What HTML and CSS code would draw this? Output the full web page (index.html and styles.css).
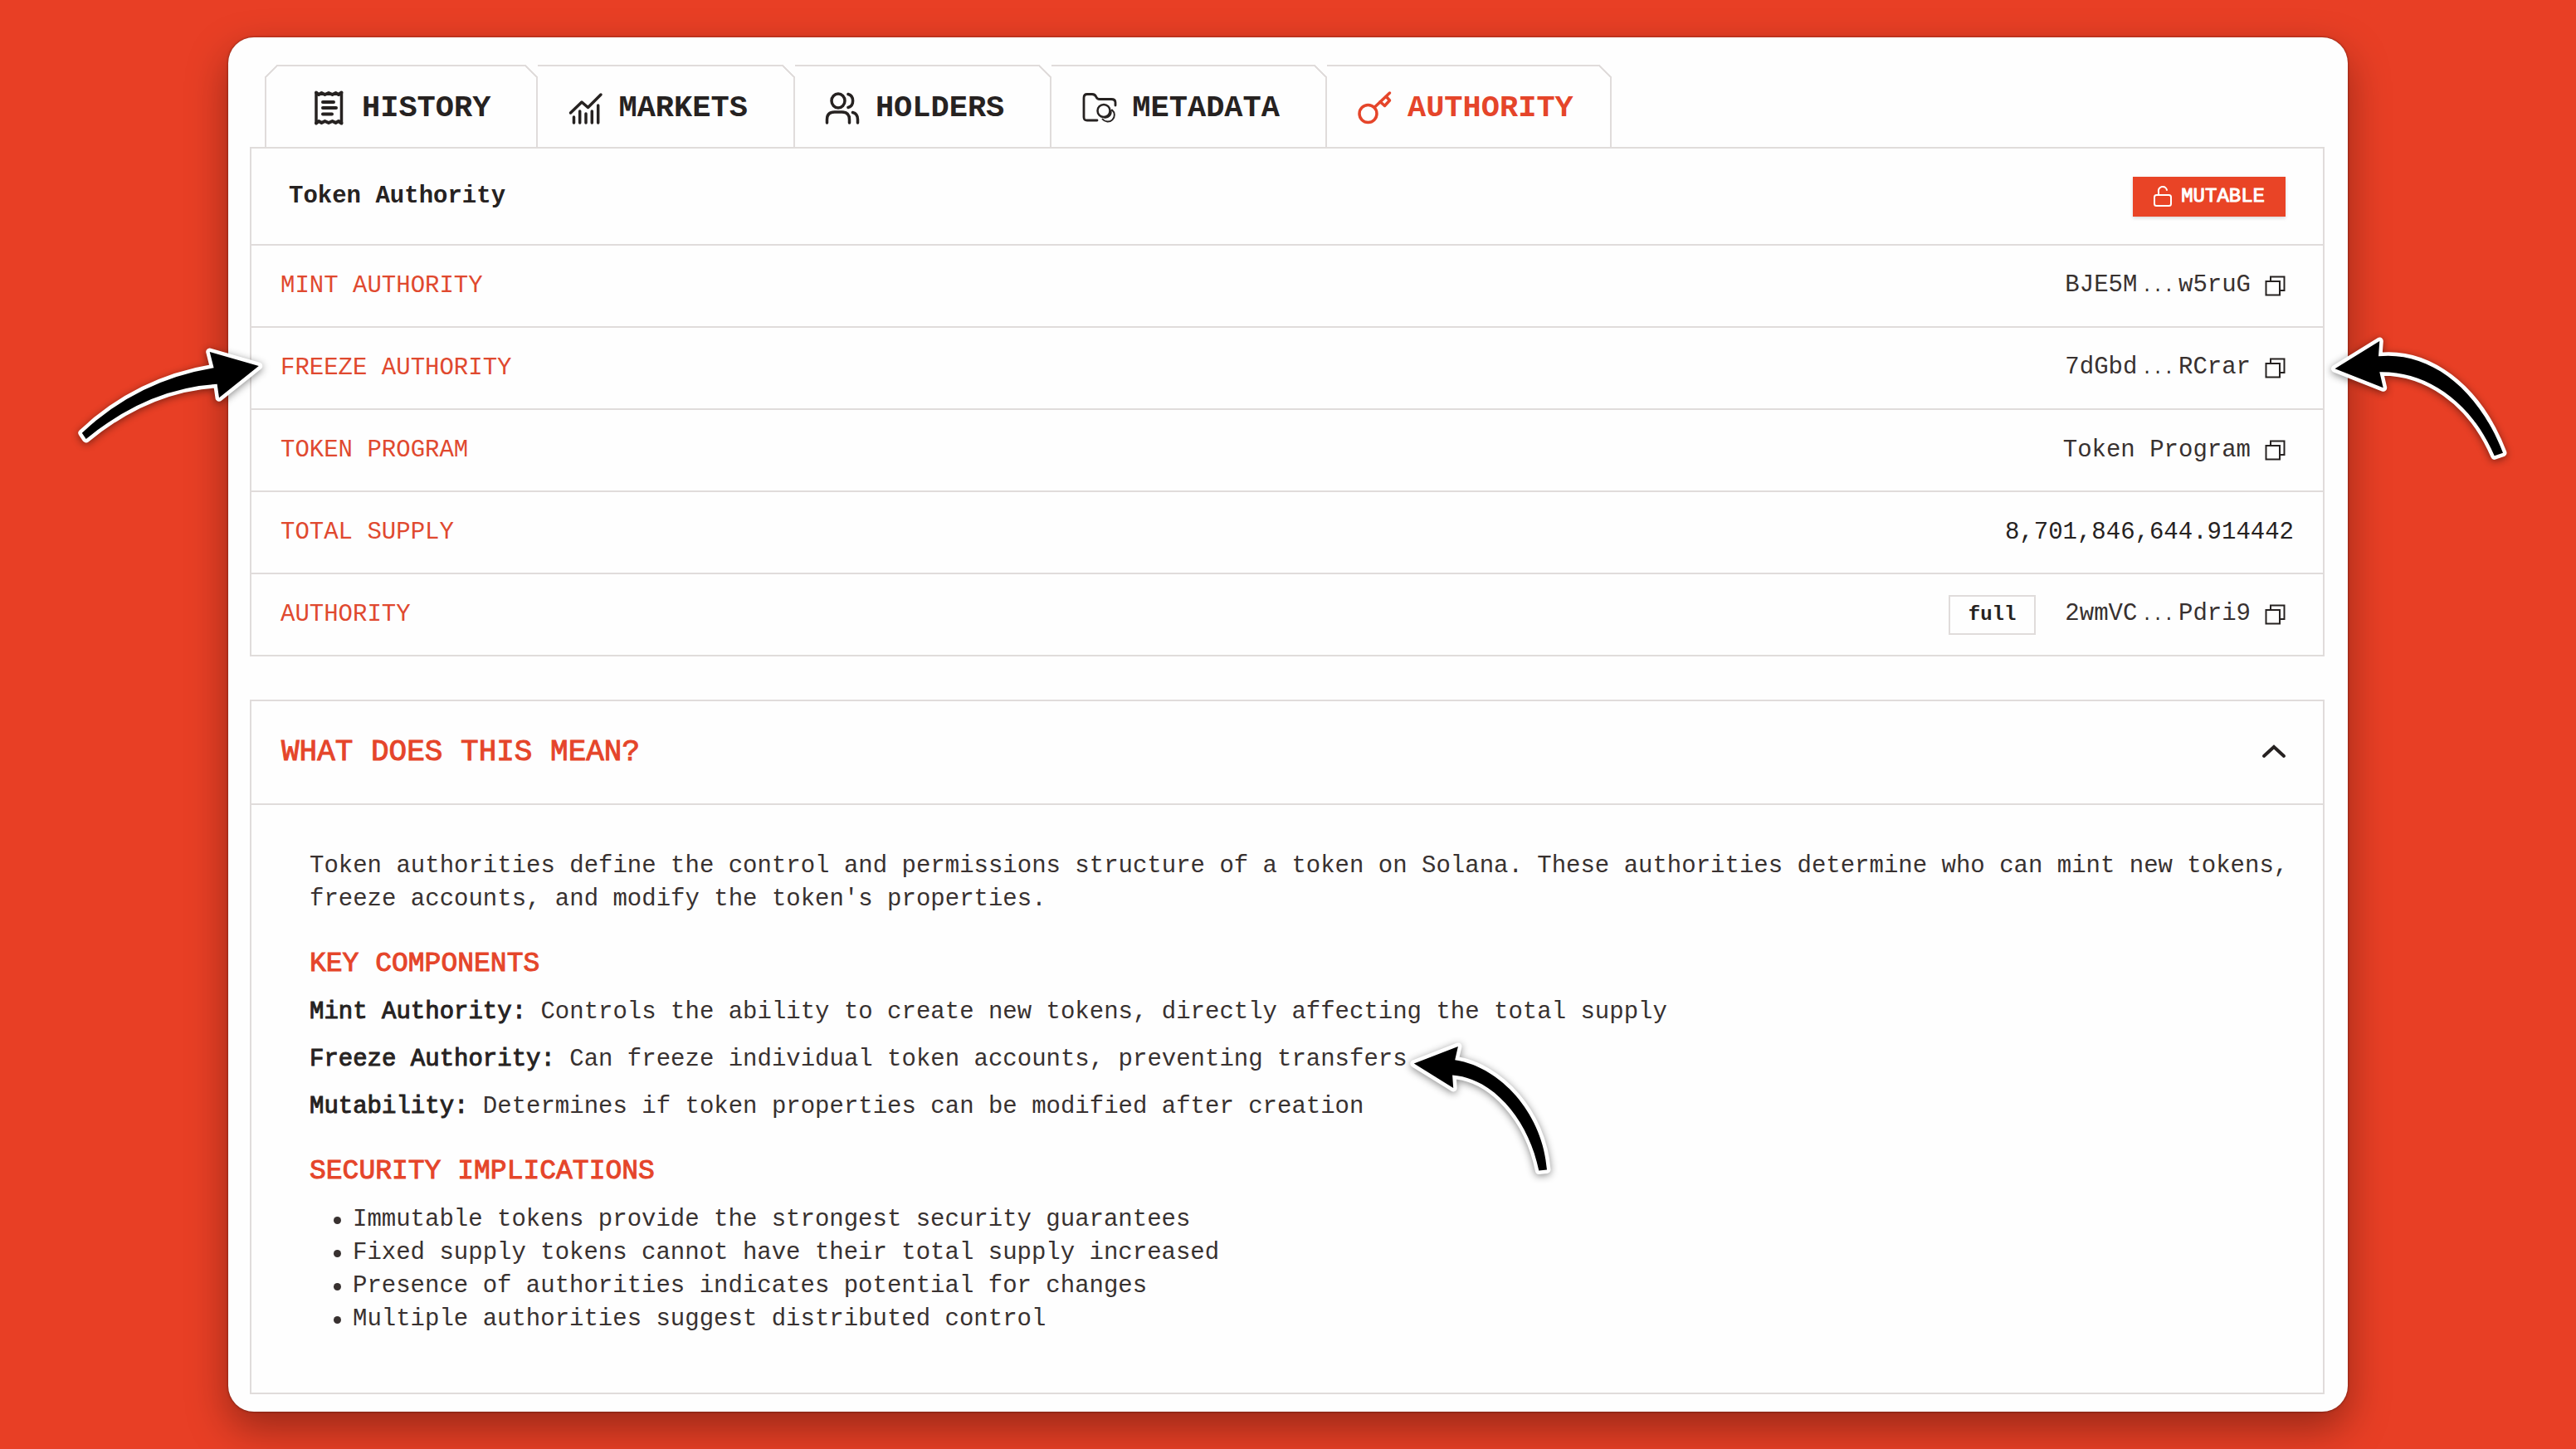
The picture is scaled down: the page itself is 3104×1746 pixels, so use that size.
FILE: index.html
```html
<!DOCTYPE html>
<html lang="en">
<head>
    <meta charset="UTF-8">
    <meta name="viewport" content="width=device-width, initial-scale=1.0">
    <title>Token Authority</title>
    <link rel="stylesheet" href="styles.css">
</head>
<body>
    <!-- Shared icons -->
    <svg class="sprite" aria-hidden="true">
        <symbol id="copy" viewBox="0 0 25 25">
            <path d="M7 6V1.5h16.500V18H19M1.500 7H18v16.500H1.500z" fill="none" stroke="currentColor" stroke-width="2"/>
        </symbol>
    </svg>

    <main class="card">
        <nav class="tabs">
            <button class="tab" type="button">
                <svg class="tab-icon" viewBox="0 0 40 40">
                    <path d="M5 2v36M35.500 2v36" stroke-width="3.500"/>
                    <path d="M5 1.500l3 2.500 3.500-2 4 2 4.500-2 4.500 2 4-2 3.500 2 3.500-2.500M5 38.500l3-2.500 3.500 2 4-2 4.500 2 4.500-2 4 2 3.500-2 3.500 2.500" stroke-width="4"/>
                    <path d="M13 13h13M13 20h16M13 27.500h11" stroke-width="4"/>
                </svg>
                HISTORY
            </button>
            <button class="tab" type="button">
                <svg class="tab-icon" viewBox="0 0 40 40">
                    <path d="M2.500 26L16 13l7.500 6.500L39 4M6.500 31v7M13.700 24v14M21 27v11M28.300 24v14M35.700 17v21"/>
                </svg>
                MARKETS
            </button>
            <button class="tab" type="button">
                <svg class="tab-icon" viewBox="0 0 40 40">
                    <ellipse cx="15" cy="11.500" rx="8" ry="8.500"/>
                    <path d="M1.500 38v-4c0-6 3-9 9-9h9c6 0 9 3 9 9v4M27 3.500c7.500 2 7.500 14 0 16M32.500 25.500c4 1 6 4 6 8.500v4"/>
                </svg>
                HOLDERS
            </button>
            <button class="tab" type="button">
                <svg class="tab-icon" viewBox="0 0 40 40">
                    <path d="M18 35H6c-3 0-4-1-4-4V8c0-3 1-4.500 4-4.500h6c3 0 4 1 5 3.500s2 2.500 4 2.500h14c3.500 0 5 1.500 5 4V17" stroke-width="2.800"/>
                    <circle cx="26" cy="23.500" r="7.500" stroke-width="2.500"/>
                    <path d="M36 22.500a8 8 0 1 1-11.500 11M26.500 31.500c5.500 1 9-3.500 8-8" stroke-width="2"/>
                </svg>
                METADATA
            </button>
            <button class="tab active" type="button">
                <svg class="tab-icon" viewBox="0 0 40 40">
                    <circle cx="12.500" cy="27" r="10.500"/>
                    <path d="M20 19.500L38.500 2M27 12.500l5.500 5 6-6.500-4.500-5"/>
                </svg>
                AUTHORITY
            </button>
        </nav>

        <section class="panel">
            <header class="panel-head">
                <h2 class="panel-title">Token Authority</h2>
                <span class="badge">
                    <svg class="lock" viewBox="0 0 22 25">
                        <rect x="1" y="11" width="20" height="13" rx="2.500"/>
                        <path d="M6 11V7a5 5 0 0 1 10-2"/>
                    </svg>
                    MUTABLE
                </span>
            </header>
            <div class="row">
                <span class="label">MINT AUTHORITY</span>
                <span class="value">BJE5M<span class="dots">...</span>w5ruG</span>
                <button class="copy" type="button" aria-label="Copy"><svg><use href="#copy"/></svg></button>
            </div>
            <div class="row">
                <svg class="arrow arrow-left" viewBox="0 0 240 130">
                    <path d="M18.800 96.700Q85.800 33.500 177.600 18.300L172.700-1 231.800 16 184 54.300 181.600 37.700Q97.400 43 23.700 104z"/>
                </svg>
                <span class="label">FREEZE AUTHORITY</span>
                <span class="value">7dGbd<span class="dots">...</span>RCrar</span>
                <button class="copy" type="button" aria-label="Copy"><svg><use href="#copy"/></svg></button>
                <svg class="arrow arrow-right" viewBox="0 0 300 200">
                    <path d="M33.500 64.300L87.300 31 86 49.300C145 43 205 85 236 165.700L225.700 169.300C197 102 142 67 87.300 68.300L91.700 87.300z"/>
                </svg>
            </div>
            <div class="row">
                <span class="label">TOKEN PROGRAM</span>
                <span class="value">Token Program</span>
                <button class="copy" type="button" aria-label="Copy"><svg><use href="#copy"/></svg></button>
            </div>
            <div class="row">
                <span class="label">TOTAL SUPPLY</span>
                <span class="value number">8,701,846,644.914442</span>
            </div>
            <div class="row">
                <span class="label">AUTHORITY</span>
                <span class="tag">full</span>
                <span class="value">2wmVC<span class="dots">...</span>Pdri9</span>
                <button class="copy" type="button" aria-label="Copy"><svg><use href="#copy"/></svg></button>
            </div>
        </section>

        <section class="panel">
            <button class="toggle" type="button" aria-expanded="true">
                WHAT DOES THIS MEAN?
                <svg class="chevron" viewBox="0 0 28 16"><path d="M2 12L14 1l12 11"/></svg>
            </button>
            <div class="content">
                <p>Token authorities define the control and permissions structure of a token on Solana. These authorities determine who can mint new tokens, freeze accounts, and modify the token's properties.</p>

                <h3>KEY COMPONENTS</h3>
                <div class="terms">
                    <p><strong>Mint Authority:</strong> Controls the ability to create new tokens, directly affecting the total supply</p>
                    <p>
                        <strong>Freeze Authority:</strong> Can freeze individual token accounts, preventing transfers
                        <svg class="arrow arrow-text" viewBox="0 0 280 240">
                            <path d="M56.800 62.600L109.900 41.900 106.200 58.200C160 66 212 122 217 190.400L207.300 191.400C195 130 152 80 103.100 76.400L104.200 92z"/>
                        </svg>
                    </p>
                    <p><strong>Mutability:</strong> Determines if token properties can be modified after creation</p>
                </div>

                <h3>SECURITY IMPLICATIONS</h3>
                <ul>
                    <li>Immutable tokens provide the strongest security guarantees</li>
                    <li>Fixed supply tokens cannot have their total supply increased</li>
                    <li>Presence of authorities indicates potential for changes</li>
                    <li>Multiple authorities suggest distributed control</li>
                </ul>
            </div>
        </section>
    </main>
</body>
</html>
```
FILE: styles.css
```css
* {
    box-sizing: border-box;
}
body {
    margin: 0;
    padding: 45px 275px;
    background-color: #e83f25;
    color: #383130;
    font-family: "Liberation Mono", monospace;
    font-size: 29px;
    line-height: 40px;
}
h2, h3, p, ul {
    margin: 0;
    padding: 0;
}
button {
    border: none;
    background: none;
    color: inherit;
    font: inherit;
    cursor: pointer;
}
.sprite {
    position: absolute;
    width: 0;
    height: 0;
}
.card {
    padding: 33px 28px 21px 26px;
    background-color: #fefefe;
    border-radius: 31px;
    box-shadow: 0 0 3px rgba(0, 0, 0, 0.5), 0 20px 50px rgba(0, 0, 0, 0.35);
}

/* Tabs */
.tabs {
    display: flex;
    padding-left: 18px;
}
.tab {
    position: relative;
    display: flex;
    align-items: center;
    gap: 20px;
    height: 99px;
    padding: 2px 55px 0 37px;
    border: solid #e0dcdb;
    border-width: 2px 2px 0 0;
    color: #262221;
    font-size: 37px;
    font-weight: bold;
}
.tab:first-child {
    padding-left: 55px;
    border-left-width: 2px;
}
.tab:last-child {
    padding-right: 44px;
}
.tab.active {
    color: #e5452a;
}
/* cut corners */
.tab::after,
.tab:first-child::before {
    content: "";
    position: absolute;
    top: -2px;
    right: -2px;
    width: 16px;
    height: 16px;
    background: linear-gradient(45deg, #fefefe 44%, #e0dcdb 44%, #e0dcdb 54%, #fefefe 54%);
}
.tab:first-child::before {
    right: auto;
    left: -2px;
    transform: scaleX(-1);
}
.tab-icon {
    width: 40px;
    height: 40px;
    overflow: visible;
    fill: none;
    stroke: currentColor;
    stroke-width: 3.5;
    stroke-linecap: round;
    stroke-linejoin: round;
}

/* Panels */
.panel {
    border: 2px solid #e0dcdb;
}
.panel + .panel {
    margin-top: 52px;
}
.panel-head {
    display: flex;
    align-items: center;
    justify-content: space-between;
    height: 115px;
    padding: 0 45px;
}
.panel-title {
    color: #262221;
    font-size: 29px;
}
.badge {
    display: flex;
    align-items: center;
    gap: 11px;
    height: 48px;
    padding: 0 25px;
    background-color: #e94426;
    box-shadow: 0 2px 4px rgba(0, 0, 0, 0.15);
    color: #fff;
    font-size: 24px;
    -webkit-text-stroke: 1px;
}
.lock {
    width: 22px;
    height: 25px;
    fill: none;
    stroke: currentColor;
    stroke-width: 2;
    stroke-linecap: round;
}
.row {
    position: relative;
    display: flex;
    align-items: center;
    height: 99px;
    padding: 0 35px;
    border-top: 2px solid #e0dcdb;
}
.label {
    margin-right: auto;
    color: #e0492f;
}
.number {
    color: #262221;
}
.dots {
    margin: 0 5px;
    font-size: 22px;
}
.copy {
    display: flex;
    margin-left: 17px;
    padding: 0 10px 0 0;
    color: #262221;
}
.copy svg {
    width: 25px;
    height: 25px;
}
.tag {
    display: flex;
    align-items: center;
    height: 48px;
    margin-right: 35px;
    padding: 0 22px;
    border: 2px solid #e0dcdb;
    color: #262221;
    font-size: 24px;
    font-weight: bold;
}

/* Explanation */
.toggle {
    display: flex;
    align-items: center;
    justify-content: space-between;
    width: 100%;
    height: 125px;
    padding: 0 45px 0 36px;
    border-bottom: 2px solid #e0dcdb;
    color: #e5452a;
    font-size: 36px;
    -webkit-text-stroke: 1px;
}
.chevron {
    width: 28px;
    height: 16px;
    overflow: visible;
    fill: none;
    stroke: #262221;
    stroke-width: 4;
    stroke-linecap: round;
}
.content {
    padding: 54px 36px 68px 70px;
}
h3 {
    margin: 36px 0 16px;
    color: #e5452a;
    font-size: 33px;
    font-weight: normal;
    line-height: 44px;
    -webkit-text-stroke: 1px;
}
.terms {
    display: flex;
    flex-direction: column;
    align-items: flex-start;
    gap: 17px;
}
.terms p {
    position: relative;
}
strong {
    color: #262221;
    font-weight: normal;
    -webkit-text-stroke: 1px;
}
ul {
    padding-left: 29px;
    list-style: none;
}
li {
    display: flex;
    align-items: center;
    gap: 14px;
}
li::before {
    content: "";
    width: 9px;
    height: 9px;
    border-radius: 50%;
    background-color: #383130;
}

/* Pointing arrows */
.arrow {
    position: absolute;
    overflow: visible;
    fill: #000;
    stroke: #fff;
    stroke-width: 9;
    stroke-linejoin: round;
    paint-order: stroke;
    filter: drop-shadow(0 2px 5px rgba(0, 0, 0, 0.45));
}
.arrow-left {
    left: -223px;
    top: 30px;
    width: 240px;
    height: 130px;
}
.arrow-right {
    right: -281px;
    top: -15px;
    width: 300px;
    height: 200px;
}
.arrow-text {
    left: 100%;
    top: -38px;
    width: 280px;
    height: 240px;
    margin-left: -49px;
}
```
